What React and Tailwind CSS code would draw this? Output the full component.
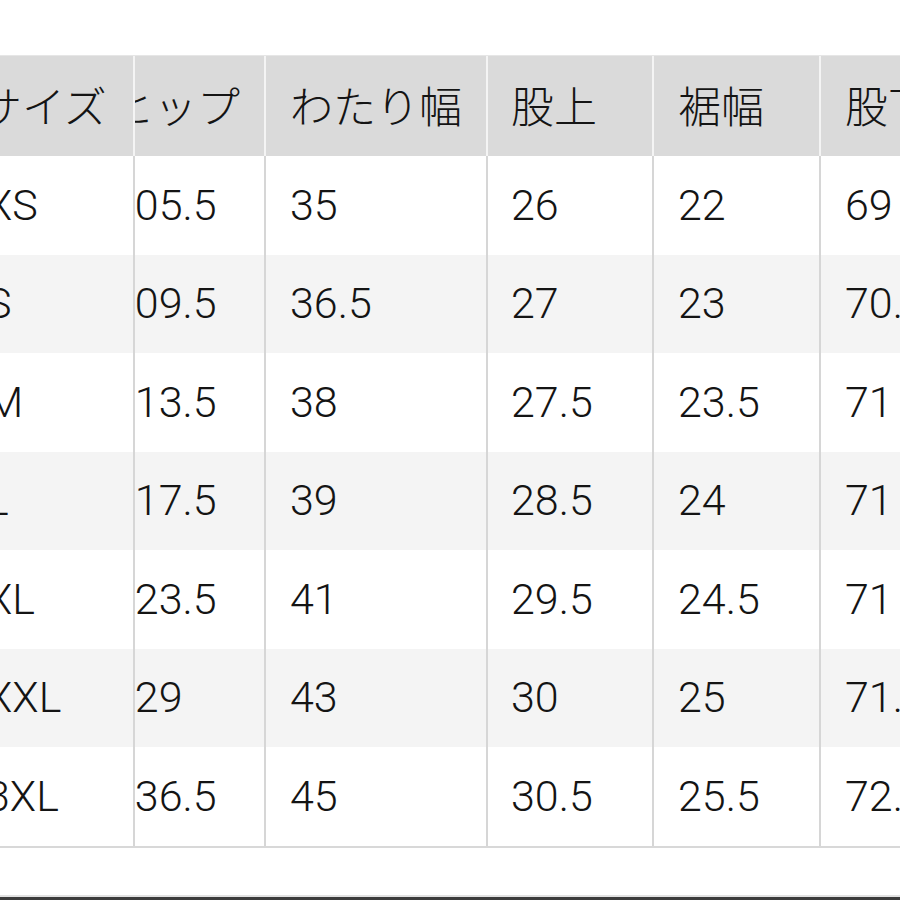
import React from 'react';

const headers = ['サイズ', 'ヒップ', 'わたり幅', '股上', '裾幅', '股下'];

const rows = [
    ['XS', '105.5', '35', '26', '22', '69'],
    ['S', '109.5', '36.5', '27', '23', '70.5'],
    ['M', '113.5', '38', '27.5', '23.5', '71'],
    ['L', '117.5', '39', '28.5', '24', '71'],
    ['XL', '123.5', '41', '29.5', '24.5', '71'],
    ['XXL', '129', '43', '30', '25', '71.5'],
    ['3XL', '136.5', '45', '30.5', '25.5', '72.5'],
];

// widths include the 2px divider on the right
const widths = ['w-[135px]', 'w-[131px]', 'w-[222px]', 'w-[166px]', 'w-[167px]', 'w-[160px]'];
const offsets = ['ml-[-14px]', 'ml-[-24px]', 'ml-[24px]', 'ml-[23px]', 'ml-[24px]', 'ml-[24px]'];
const headOffsets = ['ml-[-21px]', 'ml-[-24px]', 'ml-[24px]', 'ml-[23px]', 'ml-[24px]', 'ml-[24px]'];

const Cell = ({ i, head, children }) => (
    <div
        className={`${widths[i]} shrink-0 h-full flex items-center overflow-hidden whitespace-nowrap border-r-2 ${
            head ? 'border-[#f4f4f4]' : 'border-[#d6d6d6]'
        }`}
    >
        <span className={`${head ? headOffsets[i] : offsets[i]} shrink-0`}>{children}</span>
    </div>
);

export default function App() {
    return (
        <div className="w-[900px] h-[900px] bg-white overflow-hidden flex flex-col text-[43px] leading-none text-[#141414] font-light font-['Roboto','Noto_Sans_CJK_JP',sans-serif]">
            <div className="h-[56px] shrink-0 border-b border-[#e6e6e6]" />
            <div className="flex h-[100px] shrink-0 bg-[#dadada]">
                {headers.map((h, i) => (
                    <Cell key={h} i={i} head>
                        <span className="font-['Noto_Sans_CJK_JP',sans-serif] font-light">{h}</span>
                    </Cell>
                ))}
            </div>
            {rows.map((r, ri) => (
                <div
                    key={r[0]}
                    className={`flex h-[98.5px] shrink-0 ${ri % 2 === 1 ? 'bg-[#f4f4f4]' : 'bg-white'}`}
                >
                    {r.map((v, i) => (
                        <Cell key={i} i={i}>
                            {v}
                        </Cell>
                    ))}
                </div>
            ))}
            <div className="h-[2px] shrink-0 bg-[#d8d8d8]" />
            <div className="flex-1" />
            <div className="h-[2px] shrink-0 bg-[#e2e2e2]" />
            <div className="h-[3px] shrink-0 bg-[#3c3c3c]" />
        </div>
    );
}
